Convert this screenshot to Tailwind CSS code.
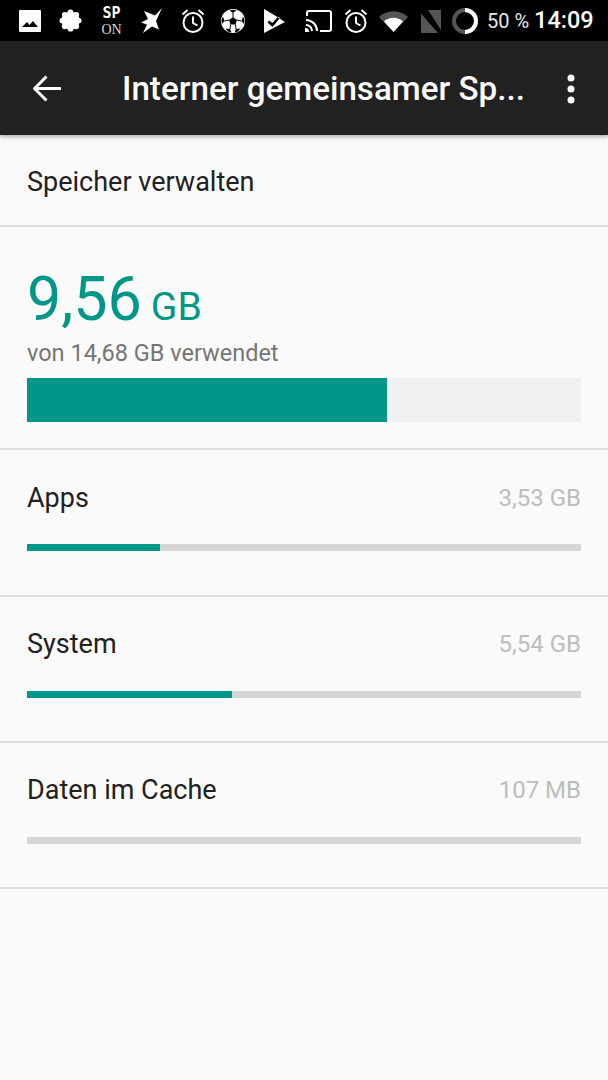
<!DOCTYPE html>
<html lang="en">

<head>
    <meta charset="UTF-8">
    <meta name="viewport" content="width=device-width, initial-scale=1.0">
    <title>Interner gemeinsamer Speicher</title>
    <script src="https://cdn.jsdelivr.net/npm/@tailwindcss/browser@4"></script>
</head>

<body class="w-[608px] h-[1080px] overflow-hidden bg-[#fafafa] font-['Roboto',sans-serif]">
    <!-- Status bar -->
    <div class="h-[41px] bg-black flex items-center pl-[19px] text-white [&>*]:shrink-0">
        <svg class="w-[22px] h-[22px] mr-[18px]" viewBox="0 0 22 22"><path fill="#fff" fill-rule="evenodd" d="M1 0h20a1 1 0 0 1 1 1v20a1 1 0 0 1-1 1H1a1 1 0 0 1-1-1V1a1 1 0 0 1 1-1zM3 17h16l-5-6-3.500 4L8 12z"/></svg>
        <svg class="w-[23px] h-[23px] mr-[18px]" viewBox="0 0 24 24"><g fill="#fff"><circle cx="12" cy="12" r="9.500"/><circle cx="12" cy="3.500" r="3"/><circle cx="12" cy="20.500" r="3"/><circle cx="3.500" cy="12" r="3"/><circle cx="20.500" cy="12" r="3"/><circle cx="6" cy="6" r="3"/><circle cx="18" cy="6" r="3"/><circle cx="6" cy="18" r="3"/><circle cx="18" cy="18" r="3"/></g></svg>
        <div class="w-[23px] mr-[18px] flex flex-col items-center">
            <span class="text-[15px] h-[18px] leading-[18px] font-bold font-['DejaVu_Sans_Mono',monospace]">SP</span>
            <span class="text-[14px] h-[16px] leading-[16px] text-[#d8d8d8] font-['Liberation_Serif',serif]">ON</span>
        </div>
        <svg class="w-[22px] h-[26px] mr-[18px]" viewBox="0 0 22 26"><path fill="#fff" d="M21 0L14 7.500 3 3l4 8-7 3.500 6 2L2 25l9-6.500 7 3-3-8.500z"/></svg>
        <svg class="w-[24px] h-[26px] mr-[16px]" viewBox="0 0 24 26" fill="none" stroke="#fff" stroke-width="2"><circle cx="12" cy="14.500" r="9.500"/><path d="M12 8.500v6.500l4.500 2.500M1.500 6.500L6.500 2M22.500 6.500L17.500 2"/></svg>
        <svg class="w-[24px] h-[24px] mr-[18px]" viewBox="0 0 24 24"><circle cx="12" cy="12" r="12" fill="#fff"/><path fill="#000" d="M12 8l4 3-1.500 4.500h-5L8 11zM8.500 1.500L12 4l3.500-2.500L12 .8zM2 7.500l1.500 4.500L1 15 .5 11zM22 7.500L20.500 12l2.500 3 .5-4zM4.500 19.500l4.500.5 1.500 3.500-3.500-1zM19.500 19.500L15 20l-1.500 3.500 3.500-1z"/><path stroke="#000" stroke-width="1" d="M12 4v4M8 11L3.500 12M16 11l4.500 1M9.500 15.500L9 20M14.500 15.500L15 20"/></svg>
        <svg class="w-[22px] h-[24px] mr-[20px]" viewBox="0 0 22 24"><path fill="#fff" fill-rule="evenodd" d="M1 0l11 6.500L22 13 1 24zM6 11.500L4.500 13.500 9.500 18 17 9l-2-1.500-5.500 6.500z"/></svg>
        <svg class="w-[27px] h-[22px] mr-[12px]" viewBox="0 0 27 22" fill="none" stroke="#fff" stroke-width="2"><path d="M2 6V3a2 2 0 0 1 2-2h20a2 2 0 0 1 2 2v16a2 2 0 0 1-2 2h-9M1 10a11 11 0 0 1 11 11M1 15a6 6 0 0 1 6 6"/><path d="M0 18a4 4 0 0 1 4 4H0z" fill="#fff" stroke="none"/></svg>
        <svg class="w-[24px] h-[26px] mr-[11px]" viewBox="0 0 24 26" fill="none" stroke="#fff" stroke-width="2"><circle cx="12" cy="14.500" r="9.500"/><path d="M12 8.500v6.500l4.500 2.500M1.500 6.500L6.500 2M22.500 6.500L17.500 2"/></svg>
        <svg class="w-[29px] h-[22px] mr-[12px]" viewBox="0 0 29 22"><path fill="#555" d="M0 7a21 21 0 0 1 29 0L14.500 22z"/><path fill="#fff" d="M5 11.500a14 14 0 0 1 19 0L14.500 22z"/></svg>
        <svg class="w-[21px] h-[24px] mr-[11px]" viewBox="0 0 21 24"><path fill="#555" d="M8 1h13v20zM1 4.500l17 19.500H1z"/></svg>
        <svg class="w-[26px] h-[26px] mr-[9px]" viewBox="0 0 26 26" fill="none" stroke-width="4"><circle cx="13" cy="13" r="11" stroke="#555"/><path d="M13 2a11 11 0 0 1 0 22" stroke="#fff"/></svg>
        <span class="text-[20px] leading-none text-[#e6e6e6] mr-[5px] whitespace-nowrap">50 %</span>
        <span class="text-[23.500px] leading-none font-medium whitespace-nowrap">14:09</span>
    </div>

    <!-- Toolbar -->
    <div class="h-[94px] pt-[2px] bg-[#212121] flex items-center shadow-[0_2px_4px_rgba(0,0,0,0.3)] relative">
        <svg class="w-[28px] h-[28px] ml-[33px] shrink-0" viewBox="0 0 28 28" fill="none" stroke="#fff" stroke-width="3"><path d="M28 13.500H2M13.500 1.500L1.500 13.500l12 12"/></svg>
        <h1 class="ml-[61px] w-[404px] shrink-0 text-[33.200px] leading-none font-medium text-[#fafafa] whitespace-nowrap">Interner gemeinsamer Sp...</h1>
        <svg class="w-[10px] h-[30px] ml-[40px] shrink-0" viewBox="0 0 10 30"><circle cx="5" cy="4" r="3.500" fill="#fff"/><circle cx="5" cy="15" r="3.500" fill="#fff"/><circle cx="5" cy="26" r="3.500" fill="#fff"/></svg>
    </div>

    <div class="h-[92px] flex items-center px-[27px] pt-[4px] border-b-2 border-[#dfdfdf] text-[27px] text-[#212121]">Speicher verwalten</div>

    <!-- Total -->
    <div class="h-[223px] px-[27px] border-b-2 border-[#dfdfdf]">
        <div class="pt-[42px] h-[111px] text-[#009688] leading-none whitespace-nowrap"><span class="text-[61px]">9,56</span><span class="text-[39px] ml-[9px]">GB</span></div>
        <p class="text-[23.500px] leading-[30px] text-[#757575]">von 14,68 GB verwendet</p>
        <div class="mt-[10px] h-[44px] bg-[#f1f1f1]"><div class="h-full bg-[#009688]" style="width: 65%"></div></div>
    </div>

    <!-- Items -->
    <div class="h-[147px] px-[27px] border-b-2 border-[#dfdfdf] pt-[31px]">
        <div class="flex justify-between items-center h-[34px]"><span class="text-[27px] text-[#212121]">Apps</span><span class="text-[24px] text-[#bdbdbd]">3,53 GB</span></div>
        <div class="mt-[29px] h-[7px] bg-[#d6d6d6]"><div class="h-full bg-[#009688]" style="width: 24%"></div></div>
    </div>
    <div class="h-[146px] px-[27px] border-b-2 border-[#dfdfdf] pt-[30px]">
        <div class="flex justify-between items-center h-[34px]"><span class="text-[27px] text-[#212121]">System</span><span class="text-[24px] text-[#bdbdbd]">5,54 GB</span></div>
        <div class="mt-[30px] h-[7px] bg-[#d6d6d6]"><div class="h-full bg-[#009688]" style="width: 37%"></div></div>
    </div>
    <div class="h-[146px] px-[27px] border-b-2 border-[#dfdfdf] pt-[30px]">
        <div class="flex justify-between items-center h-[34px]"><span class="text-[27px] text-[#212121]">Daten im Cache</span><span class="text-[24px] text-[#bdbdbd]">107 MB</span></div>
        <div class="mt-[30px] h-[7px] bg-[#d6d6d6]"></div>
    </div>
</body>

</html>
